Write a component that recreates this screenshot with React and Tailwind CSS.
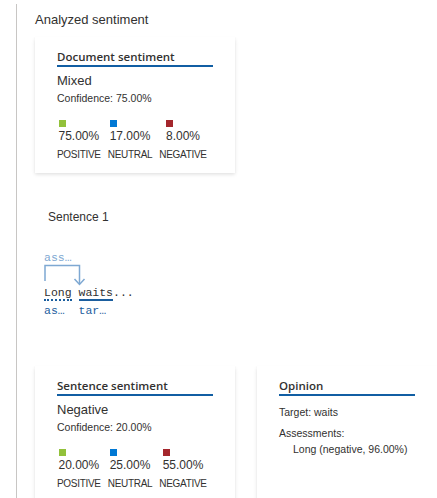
const card = "bg-white shadow-[0_1.6px_3.6px_rgba(0,0,0,0.13),0_0.3px_0.9px_rgba(0,0,0,0.11)]";

function Heading({ children }) {
  return (
    <div className="border-b-2 border-[#115ea3] pt-[12px] font-['Open_Sans',sans-serif] text-[11.5px] font-semibold leading-[16px] text-[#323130]">
      {children}
    </div>
  );
}

function Score({ color, value, label }) {
  return (
    <div className="flex flex-col items-center">
      <div className="flex flex-col items-start">
        <div className="h-[7px] w-[7px]" style={{ backgroundColor: color }} />
        <div className="mt-[2px] text-[12px] leading-[14px] text-[#323130]">{value}</div>
      </div>
      <div className="mt-[6px] text-[10px] leading-[12px] tracking-[-0.3px] text-[#323130]">{label}</div>
    </div>
  );
}

function SentimentCard({ title, label, confidence, scores }) {
  return (
    <div className={`${card} w-[200px] shrink-0 px-[22px] pb-[12px]`}>
      <Heading>{title}</Heading>
      <div className="mt-[6px] text-[13px] leading-[16px] text-[#323130]">{label}</div>
      <div className="mt-[2px] text-[10.5px] leading-[14px] text-[#323130]">Confidence: {confidence}</div>
      <div className="mt-[15px] flex gap-[7px]">
        <Score color="#92c13b" value={scores[0]} label="POSITIVE" />
        <Score color="#0078d4" value={scores[1]} label="NEUTRAL" />
        <Score color="#a4262c" value={scores[2]} label="NEGATIVE" />
      </div>
    </div>
  );
}

function Diagram() {
  return (
    <div className="ml-[9px] mt-[27px] font-['Liberation_Mono',monospace] text-[11.5px]">
      <div className="h-[12px] leading-[12px] text-[#7ea8d2]">ass…</div>
      <svg width="50" height="22" viewBox="0 0 50 22" className="block">
        <path d="M1 17 V1.5 H35.5 V20" fill="none" stroke="#7ea8d2" strokeWidth="1.5" />
        <path d="M30.5 15 L35.5 20.5 L40.5 15" fill="none" stroke="#7ea8d2" strokeWidth="1.5" />
      </svg>
      <div className="flex items-start text-[#323130]">
        <div className="flex flex-col">
          <span className="border-b-2 border-dotted border-[#1b5e9e] leading-[13px]">Long</span>
          <span className="mt-[3px] leading-[14px] text-[#1b5e9e]">as…</span>
        </div>
        <span className="leading-[13px]">&nbsp;</span>
        <div className="flex flex-col">
          <span className="border-b-2 border-[#1b5e9e] leading-[13px]">waits</span>
          <span className="mt-[3px] leading-[14px] text-[#1b5e9e]">tar…</span>
        </div>
        <span className="leading-[13px]">...</span>
      </div>
    </div>
  );
}

export default function App() {
  return (
    <div className="min-h-[498px] overflow-hidden bg-white font-['Liberation_Sans',Arial,sans-serif] text-[#323130]">
      <div className="ml-4 mt-1 min-h-[494px] border-l border-[#c8c6c4] pl-[18px]">
        <div className="pt-[8px] text-[13px] leading-[16px]">Analyzed sentiment</div>
        <div className="mt-[9px]">
          <SentimentCard
            title="Document sentiment"
            label="Mixed"
            confidence="75.00%"
            scores={["75.00%", "17.00%", "8.00%"]}
          />
        </div>
        <div className="ml-[13px] mt-[36px] text-[12px] leading-[16px]">Sentence 1</div>
        <Diagram />
        <div className="mt-[48px] flex gap-[22px]">
          <SentimentCard
            title="Sentence sentiment"
            label="Negative"
            confidence="20.00%"
            scores={["20.00%", "25.00%", "55.00%"]}
          />
          <div className={`${card} w-[180px] shrink-0 px-[22px]`}>
            <Heading>Opinion</Heading>
            <div className="mt-[9px] text-[10.5px] leading-[14px]">Target: waits</div>
            <div className="mt-[7px] text-[10.5px] leading-[14px]">Assessments:</div>
            <div className="mt-[2px] pl-[14px] text-[10.5px] leading-[14px]">Long (negative, 96.00%)</div>
          </div>
        </div>
      </div>
    </div>
  );
}
